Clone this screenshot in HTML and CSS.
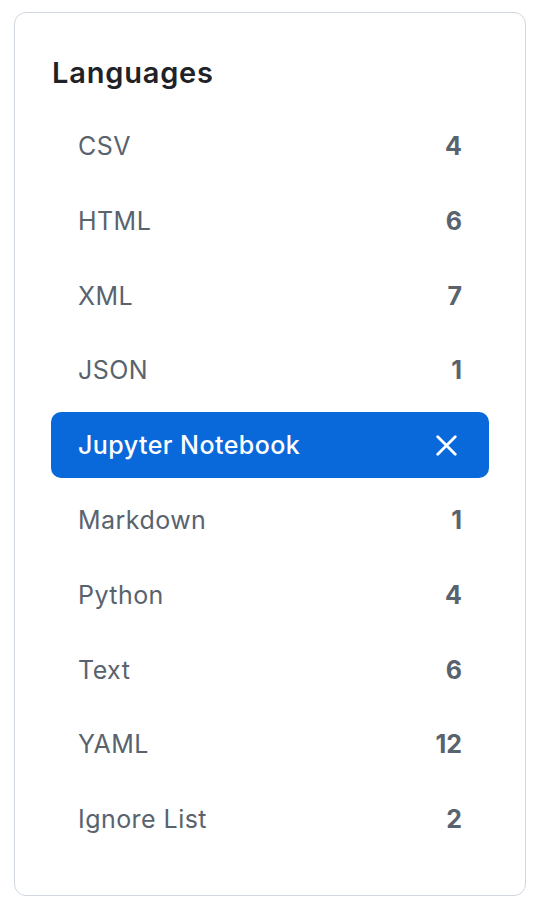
FILE: index.html
```html
<!DOCTYPE html>
<html lang="en">
<head>
<meta charset="utf-8">
<title>Languages</title>
<link rel="stylesheet" href="styles.css">
</head>
<body>
<div class="card">
  <h2 class="title">Languages</h2>
  <ul class="list">
    <li class="item"><span class="name">CSV</span><span class="count">4</span></li>
    <li class="item"><span class="name">HTML</span><span class="count">6</span></li>
    <li class="item"><span class="name">XML</span><span class="count">7</span></li>
    <li class="item"><span class="name">JSON</span><span class="count">1</span></li>
    <li class="item selected"><span class="name">Jupyter Notebook</span>
      <svg class="close" width="24" height="24" viewBox="0 0 24 24" aria-hidden="true"><path d="M2 2 L22 22 M22 2 L2 22" stroke="#fff" stroke-width="3.2" stroke-linecap="round" fill="none"/></svg>
    </li>
    <li class="item"><span class="name">Markdown</span><span class="count">1</span></li>
    <li class="item"><span class="name">Python</span><span class="count">4</span></li>
    <li class="item"><span class="name">Text</span><span class="count">6</span></li>
    <li class="item"><span class="name">YAML</span><span class="count">12</span></li>
    <li class="item"><span class="name">Ignore List</span><span class="count">2</span></li>
  </ul>
</div>
</body>
</html>
```
FILE: styles.css
```css
* { box-sizing: border-box; }
body {
  margin: 0;
  background: #fff;
  font-family: Inter, "Liberation Sans", sans-serif;
}
.card {
  margin: 12px 0 0 14px;
  width: 512px;
  height: 884px;
  border: 1.5px solid #d0d7de;
  border-radius: 12px;
  padding: 40px 36px 0 36px;
}
.title {
  margin: 0 0 20px 1px;
  font-size: 29px;
  letter-spacing: 0.8px;
  line-height: 40px;
  font-weight: 600;
  color: #1f2328;
}
.list {
  list-style: none;
  margin: 0;
  padding: 0;
  display: flex;
  flex-direction: column;
  gap: 8.8px;
}
.item {
  height: 66px;
  display: flex;
  align-items: center;
  justify-content: space-between;
  padding: 0 27px;
  border-radius: 10px;
  font-size: 25px;
  letter-spacing: 0.45px;
  color: #59636e;
}
.count {
  font-weight: 700;
  letter-spacing: 0;
}
.selected {
  background: #0969da;
  color: #fff;
  font-weight: 500;
  padding-right: 32px;
}
.close {
  width: 21px;
  height: 21px;
}
```
